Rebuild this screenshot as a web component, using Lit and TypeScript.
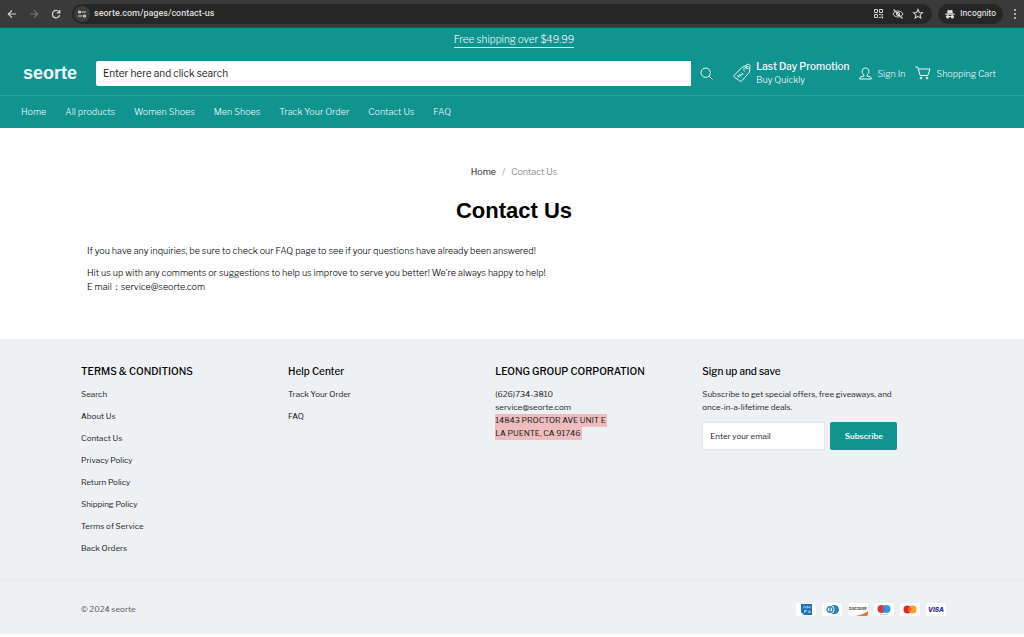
import { LitElement, html, svg, css } from "lit";
import { customElement } from "lit/decorators.js";

const navLinks = ["Home", "All products", "Women Shoes", "Men Shoes", "Track Your Order", "Contact Us", "FAQ"];
const termsLinks = ["Search", "About Us", "Contact Us", "Privacy Policy", "Return Policy", "Shipping Policy", "Terms of Service", "Back Orders"];
const helpLinks = ["Track Your Order", "FAQ"];

const cards = [
  { name: "American Express", art: svg`<path d="M5 1h11v11H8L5 9z" fill="#1b6fba"/><path d="M7 5.500l1.500-2.500L10 5.500M11 5.500v-2.500l1.500 2 1.500-2v2.500M8.500 10v-2.500h2.500M8.500 8.800h2M12 7.500l3 2.500M15 7.500l-3 2.500" stroke="#d5e8f8" stroke-width=".7" fill="none"/>` },
  { name: "Diners Club", art: svg`<path d="M9 2h3.500a4.500 4.500 0 0 1 0 9H9z" fill="#2d7fb5"/><circle cx="8" cy="6.500" r="4.500" fill="#fff"/><circle cx="8" cy="6.500" r="3.500" fill="#2d7fb5"/><path d="M7.300 4.200a2.500 2.500 0 0 0 0 4.600zM8.700 4.200a2.500 2.500 0 0 1 0 4.600z" fill="#fff"/>` },
  { name: "Discover", art: svg`<path d="M20 8v5H7c6-1 10-2.500 13-5z" fill="#e8743b"/><text x="1" y="7" font-size="3.400" font-weight="700" fill="#3b3230">DISCOVER</text>` },
  { name: "Maestro", art: svg`<circle cx="7.500" cy="6" r="4" fill="#e2303a"/><circle cx="12.500" cy="6" r="4" fill="#26a0e0"/><path d="M10 2.900a4 4 0 0 1 0 6.200a4 4 0 0 1 0-6.200z" fill="#7069b4"/><path d="M6 11.500h8" stroke="#999" stroke-width=".7" stroke-dasharray="1 .5"/>` },
  { name: "Mastercard", art: svg`<circle cx="7.500" cy="6.500" r="4" fill="#e5242d"/><circle cx="12.500" cy="6.500" r="4" fill="#f6a02b"/><path d="M10 3.400a4 4 0 0 1 0 6.200a4 4 0 0 1 0-6.200z" fill="#f26327"/>` },
  { name: "Visa", art: svg`<text x="2" y="9" font-size="6.500" font-weight="800" font-style="italic" fill="#2b2f8e">VISA</text>` },
];

@customElement("app-root")
export class AppRoot extends LitElement {
  static styles = css`
    :host { display: block; min-height: 100vh; background: #fff; color: #1c1d1d; font: 400 9px/13px "Libre Franklin", "Open Sans", sans-serif; }
    * { box-sizing: border-box; }
    a { color: inherit; text-decoration: none; }
    button { font: inherit; color: inherit; border: 0; background: none; padding: 0; cursor: pointer; }
    svg { display: block; fill: none; stroke: currentColor; flex: none; }
    h1, h2, p, ul { margin: 0; padding: 0; }
    ul { list-style: none; }

    .browser { display: flex; align-items: center; height: 28px; padding: 0 7px 0 6px; gap: 10px; background: #3a3a3a; border-bottom: 1px solid #454545; color: #d3d3d3; }
    .browser .dim { color: #777; }
    .omnibox { flex: 1; display: flex; align-items: center; height: 20px; padding: 0 8px 0 2px; border-radius: 10px; background: #262626; gap: 8px; margin-right: -4px; }
    .site { display: grid; place-items: center; width: 16px; height: 16px; border-radius: 8px; background: #3d3d3d; margin-right: -4px; }
    .address { flex: 1; min-width: 0; font: 500 9px/13px Roboto, sans-serif; color: #dedede; background: none; border: 0; padding: 0; outline: 0; }
    .incognito { display: flex; align-items: center; gap: 5px; height: 20px; padding: 0 7px; border-radius: 10px; background: #262626; color: #e4e4e4; font: 500 8px/13px Inter, sans-serif; }

    header { background: #119390; color: #eefaf9; font-weight: 300; }
    .announce { display: flex; justify-content: center; padding: 4px 0 0 4px; }
    .announce a { font-size: 10px; line-height: 15px; border-bottom: 1px solid #d0eeec; }
    .bar { display: flex; align-items: center; height: 48px; padding: 3px 28px 0 23px; border-bottom: 1px solid #2d9f9c; }
    .logo { width: 73px; font: bold 18px/24px "Liberation Sans", sans-serif; }
    .search { flex: 1; display: flex; align-items: center; gap: 9px; }
    .search input { flex: 1; min-width: 0; height: 25px; padding: 0 7px; border: 0; border-radius: 2px 0 0 2px; background: #fff; color: #1c1d1d; font: inherit; font-size: 10px; font-weight: 400; }
    input::placeholder { color: #222; opacity: 1; }
    .tools { display: flex; align-items: center; gap: 10px; margin-left: 20px; }
    .tools a { display: flex; align-items: center; gap: 5px; }
    .promo strong { display: block; font-size: 10px; font-weight: 500; color: #fff; }
    .nav { display: flex; gap: 19px; height: 32px; align-items: center; padding: 0 21px 1px; }

    main { padding: 37px 83px 45px 87px; }
    .crumbs { display: flex; justify-content: center; gap: 6px; color: #777; }
    .crumbs a { color: #1c1d1d; }
    .crumbs span { font-weight: 300; }
    .crumbs i { color: #999; font-style: normal; }
    h1 { margin: 19px 0 19px; text-align: center; font: bold 22px/28px "Liberation Sans", sans-serif; color: #000; }
    .copy { line-height: 14px; font-weight: 300; color: #000; }
    .copy p + p { margin-top: 8px; }

    footer { background: #edf1f3; font-size: 8px; }
    .columns { display: grid; grid-template-columns: repeat(4, 24%); padding: 24px 80px 24px 81px; border-bottom: 1px solid #e6eaec; }
    h2 { font-size: 10px; line-height: 16px; font-weight: 500; margin-bottom: 9px; color: #000; }
    .links { display: grid; gap: 9px; }
    .marked { display: inline-block; padding-right: 1px; background: #efbdbf; }
    .signup { display: flex; gap: 5px; margin-top: 8px; width: 195px; }
    .signup input { flex: 1; min-width: 0; height: 28px; padding: 0 7px; border: 1px solid #e6e9eb; background: #fff; font: inherit; }
    .signup button { width: 67px; height: 28px; border-radius: 2px; background: #119390; color: #e9f7f6; font-weight: 600; }
    .legal { display: flex; align-items: center; justify-content: space-between; height: 54px; padding: 4px 78px 0 81px; color: #555; }
    .cards { display: flex; gap: 6px; }
    .cards svg { background: #fff; border-radius: 2px; stroke: none; font-family: Inter, sans-serif; }
  `;

  private links(items: string[]) {
    return html`<ul class="links">${items.map((t) => html`<li><a href="#">${t}</a></li>`)}</ul>`;
  }

  render() {
    return html`
      <div class="browser">
        <button aria-label="Back"><svg width="12" height="12" viewBox="0 0 12 12" stroke-width="1.200"><path d="M10 6H2.500M6 2.300L2.300 6 6 9.700"/></svg></button>
        <button class="dim" aria-label="Forward"><svg width="12" height="12" viewBox="0 0 12 12" stroke-width="1.200"><path d="M2 6h7.500M6 2.300L9.700 6 6 9.700"/></svg></button>
        <button aria-label="Reload"><svg width="12" height="12" viewBox="0 0 12 12" stroke-width="1.200"><path d="M9.400 4.500A3.700 3.700 0 1 0 9.700 7M9.800 1.800v3H6.800"/></svg></button>
        <div class="omnibox">
          <span class="site"><svg width="10" height="10" viewBox="0 0 10 10" stroke-width="1.200"><circle cx="2.500" cy="3" r="1"/><path d="M4.500 3H9M1 7h4.500"/><circle cx="7.500" cy="7" r="1"/></svg></span>
          <input class="address" aria-label="Address" value="seorte.com/pages/contact-us">
          <button aria-label="QR code"><svg width="11" height="11" viewBox="0 0 11 11"><path d="M1.500 1.500h3v3h-3zM6.500 1.500h3v3h-3zM1.500 6.500h3v3h-3z"/><path d="M6 6.500h2M8 8h2M6 9.500h2M9.500 9v1.500M9.500 6v1" stroke-width="1.200"/></svg></button>
          <button aria-label="Tracking protection"><svg width="12" height="12" viewBox="0 0 12 12"><path d="M1 6c2-4 8-4 10 0-2 4-8 4-10 0z"/><circle cx="6" cy="6" r="1.600"/><path d="M1.500 1.500l9 9" stroke-width="1.200"/></svg></button>
          <button aria-label="Bookmark"><svg width="12" height="12" viewBox="0 0 12 12" stroke-width="1.100"><path d="M6 1.500l1.300 3 3.200.3-2.400 2.100.7 3.200L6 8.400l-2.800 1.700.7-3.200-2.400-2.100 3.200-.3z"/></svg></button>
        </div>
        <div class="incognito"><svg width="10" height="10" viewBox="0 0 10 10"><path d="M2 4.500L2.800.8l1.700.5h1L7.200.8 8 4.500z" fill="currentColor" stroke="none"/><path d="M.3 5.200h9.400" stroke-width="1.200"/><circle cx="2.700" cy="7.800" r="1.300" fill="currentColor"/><circle cx="7.300" cy="7.800" r="1.300" fill="currentColor"/><path d="M4 7.500h2"/></svg>Incognito</div>
        <button aria-label="Menu"><svg width="4" height="12" viewBox="0 0 4 12"><g fill="currentColor" stroke="none"><circle cx="2" cy="2" r="1"/><circle cx="2" cy="6" r="1"/><circle cx="2" cy="10" r="1"/></g></svg></button>
      </div>

      <header>
        <div class="announce"><a href="#">Free shipping over $49.99</a></div>
        <div class="bar">
          <a class="logo" href="#">seorte</a>
          <form class="search" role="search">
            <input type="search" aria-label="Search" placeholder="Enter here and click search">
            <button type="button" aria-label="Search"><svg width="13" height="13" viewBox="0 0 13 13"><circle cx="5.700" cy="5.700" r="4.700"/><path d="M9.200 9.200l3.300 3.300"/></svg></button>
          </form>
          <div class="tools">
            <a class="promo" href="#">
              <svg width="18" height="20" viewBox="0 0 18 20" stroke-linejoin="round"><path d="M1 12.500L8.500 4.800l6-3.300c1.500-.7 2.700.2 2.500 1.700l-.6 6-7.600 8.600c-.7.7-1.400.7-2.100.1l-5.600-4c-.6-.4-.6-.9-.1-1.400z"/><circle cx="14" cy="4.500" r="1.300"/><path d="M13.500 4.500c-2.500 0-3.500 1.500-2 4" stroke-width=".9"/><path d="M4.500 12l2 2.500M6.500 11l2 2.500M8.500 9.500l2 2M4.500 14l5.500-3.500" stroke-width=".9"/></svg>
              <span><strong>Last Day Promotion</strong>Buy Quickly</span>
            </a>
            <a href="#"><svg width="13" height="13" viewBox="0 0 13 13"><path d="M5 8c-1.300-1-1.900-2.200-1.900-3.700C3.100 2.300 4.500 1 6.500 1s3.400 1.300 3.400 3.300C9.900 5.800 9.300 7 8 8v1l3 .8c.9.300 1.300.9 1.300 2.200H.7c0-1.300.4-1.900 1.300-2.200L5 9z"/></svg>Sign In</a>
            <a href="#"><svg width="16" height="14" viewBox="0 0 16 14"><path d="M.3 1h2.400l2.500 8.500h7.600L15 3H3.300"/><circle cx="6" cy="12" r=".9"/><circle cx="12" cy="12" r=".9"/></svg>Shopping Cart</a>
          </div>
        </div>
        <nav class="nav">${navLinks.map((t) => html`<a href="#">${t}</a>`)}</nav>
      </header>

      <main>
        <nav class="crumbs" aria-label="Breadcrumb"><a href="#">Home</a><i>/</i><span>Contact Us</span></nav>
        <h1>Contact Us</h1>
        <div class="copy">
          <p>If you have any inquiries, be sure to check our FAQ page to see if your questions have already been answered!</p>
          <p>Hit us up with any comments or suggestions to help us improve to serve you better! We're always happy to help!<br>E mail：service@seorte.com</p>
        </div>
      </main>

      <footer>
        <div class="columns">
          <section><h2>TERMS &amp; CONDITIONS</h2>${this.links(termsLinks)}</section>
          <section><h2>Help Center</h2>${this.links(helpLinks)}</section>
          <section><h2>LEONG GROUP CORPORATION</h2>
            <p>(626)734-3810<br>service@seorte.com<br><span class="marked">14843 PROCTOR AVE UNIT E</span><br><span class="marked">LA PUENTE, CA 91746</span></p>
          </section>
          <section><h2>Sign up and save</h2>
            <p>Subscribe to get special offers, free giveaways, and once-in-a-lifetime deals.</p>
            <form class="signup"><input type="email" aria-label="Enter your email" placeholder="Enter your email"><button type="button">Subscribe</button></form>
          </section>
        </div>
        <div class="legal"><span>© 2024 seorte</span>
          <div class="cards">${cards.map((c) => html`<svg role="img" aria-label=${c.name} width="20" height="13" viewBox="0 0 20 13">${c.art}</svg>`)}</div>
        </div>
      </footer>
    `;
  }
}
